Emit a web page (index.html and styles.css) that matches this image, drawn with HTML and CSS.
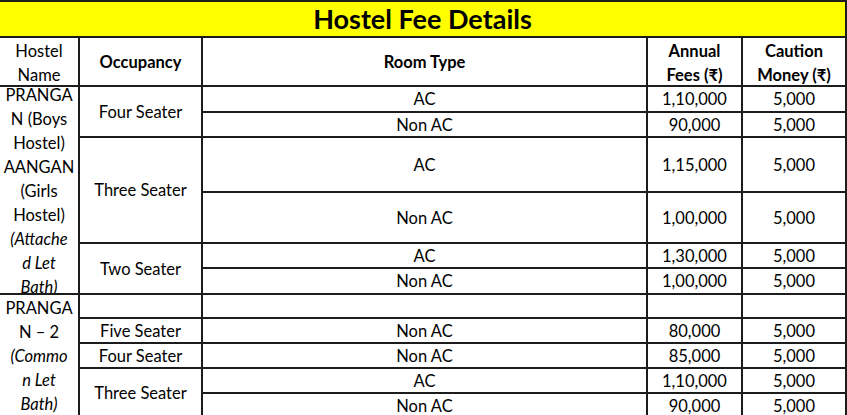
FILE: index.html
```html
<!DOCTYPE html>
<html>
<head>
<meta charset="utf-8">
<link rel="stylesheet" href="styles.css">
</head>
<body>
<table class="fees">
  <colgroup>
    <col class="c1"><col class="c2"><col class="c3"><col class="c4"><col class="c5">
  </colgroup>
  <tr class="r-title"><th colspan="5" class="title">Hostel Fee Details</th></tr>
  <tr class="r-head">
    <td class="hn"><div class="lines"><span>Hostel</span><span>Name</span></div></td>
    <th>Occupancy</th>
    <th>Room Type</th>
    <th><div class="lines"><span>Annual</span><span>Fees (₹)</span></div></th>
    <th><div class="lines"><span>Caution</span><span>Money (₹)</span></div></th>
  </tr>
  <tr class="r26">
    <td rowspan="6" class="hn"><div class="hbox h1">
      <span>PRANGA</span><span>N (Boys</span><span>Hostel)</span><span>AANGAN</span><span>(Girls</span><span>Hostel)</span><span class="it">(Attache</span><span class="it">d Let</span><span class="it">Bath)</span>
    </div></td>
    <td rowspan="2">Four Seater</td><td>AC</td><td>1,10,000</td><td>5,000</td>
  </tr>
  <tr class="r25"><td>Non AC</td><td>90,000</td><td>5,000</td></tr>
  <tr class="r55"><td rowspan="2">Three Seater</td><td>AC</td><td>1,15,000</td><td>5,000</td></tr>
  <tr class="r51"><td>Non AC</td><td>1,00,000</td><td>5,000</td></tr>
  <tr class="r25"><td rowspan="2">Two Seater</td><td>AC</td><td>1,30,000</td><td>5,000</td></tr>
  <tr class="r26"><td>Non AC</td><td>1,00,000</td><td>5,000</td></tr>
  <tr class="r24">
    <td rowspan="5" class="hn"><div class="hbox h2">
      <span>PRANGA</span><span>N – 2</span><span class="it">(Commo</span><span class="it">n Let</span><span class="it">Bath)</span>
    </div></td>
    <td></td><td></td><td></td><td></td>
  </tr>
  <tr class="r25"><td>Five Seater</td><td>Non AC</td><td>80,000</td><td>5,000</td></tr>
  <tr class="r25"><td>Four Seater</td><td>Non AC</td><td>85,000</td><td>5,000</td></tr>
  <tr class="r25"><td rowspan="2">Three Seater</td><td>AC</td><td>1,10,000</td><td>5,000</td></tr>
  <tr class="r25"><td>Non AC</td><td>90,000</td><td>5,000</td></tr>
</table>
</body>
</html>
```
FILE: styles.css
```css
html, body {
  margin: 0;
  padding: 0;
  background: #ffffff;
}
body {
  font-family: Lato, "Noto Sans", "DejaVu Sans", sans-serif;
  color: #000;
  font-size: 16.5px;
}
.fees {
  border-collapse: collapse;
  table-layout: fixed;
  width: 846px;
  margin-top: 0;
}
.c1 { width: 79px; }
.c2 { width: 123px; }
.c3 { width: 445px; }
.c4 { width: 95px; }
.c5 { width: 104px; }
.fees td, .fees th {
  border: 2px solid #1c1c1c;
  padding: 0;
  text-align: center;
  vertical-align: middle;
  line-height: 20px;
  font-size: 16.5px;
}
.fees tr > :first-child { border-left: none; }
.fees th { font-weight: 700; }
.title {
  background: #ffff00;
  font-size: 27px !important;
  height: 34px;
  line-height: 34px !important;
  font-weight: 700;
}
.r-head td, .r-head th { height: 47px; }
.lines {
  display: flex;
  flex-direction: column;
  align-items: center;
  justify-content: center;
  line-height: 24px;
  height: 47px;
  padding-top: 3px;
  box-sizing: border-box;
}
.r26 td { height: 24px; }
.r25 td { height: 23px; }
.r24 td { height: 22px; }
.r55 td { height: 53px; }
.r51 td { height: 49px; }
.fees td.hn { vertical-align: top; }
.hbox {
  display: flex;
  flex-direction: column;
  align-items: center;
  justify-content: center;
  overflow: hidden;
  line-height: 24px;
}
.h1 { height: 206px; padding-top: 1px; box-sizing: border-box; }
.h2 { height: 120px; justify-content: flex-start; padding-top: 1px; }
.it { font-style: italic; }
```
